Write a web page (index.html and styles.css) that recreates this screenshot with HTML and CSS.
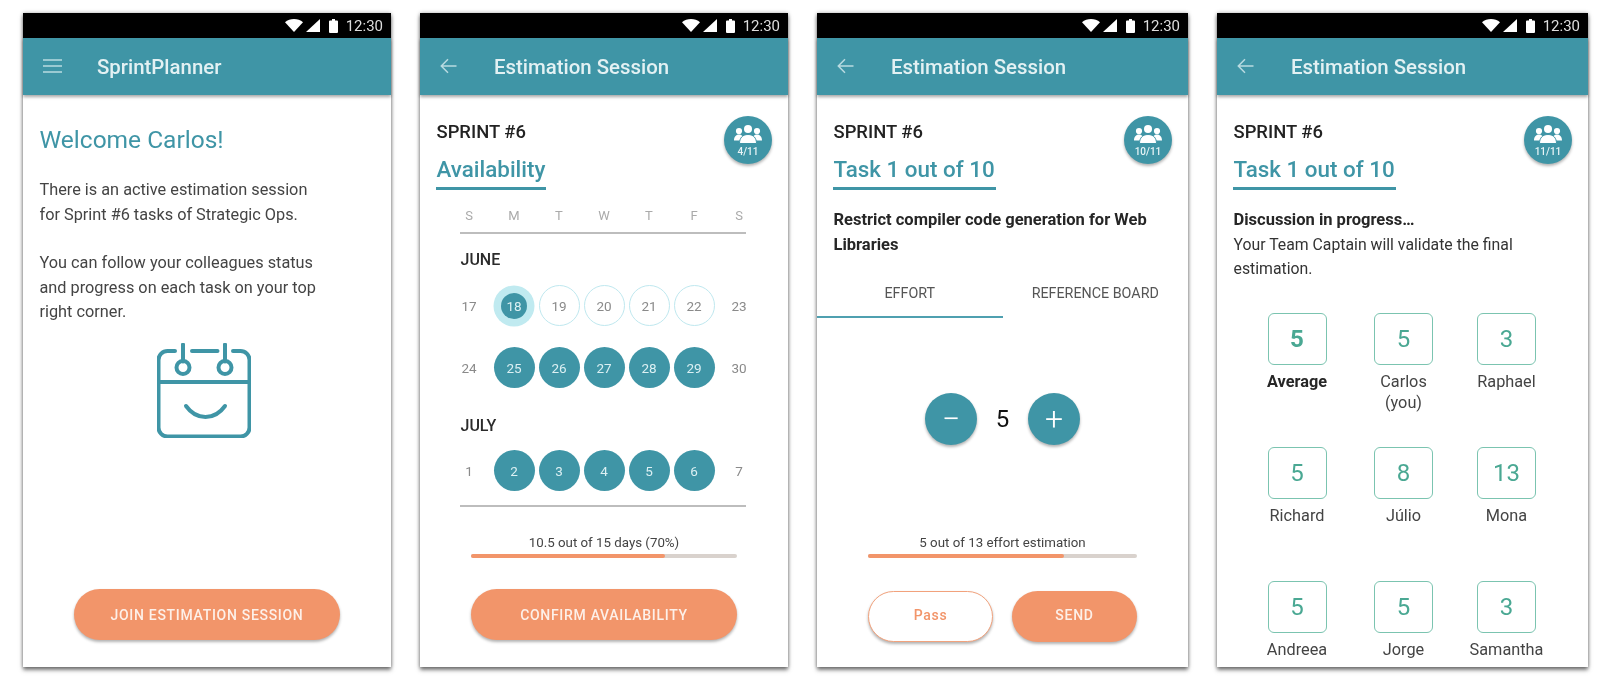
FILE: index.html
```html
<!DOCTYPE html>
<html lang="en">
<head>
    <meta charset="UTF-8">
    <title>SprintPlanner</title>
    <link rel="stylesheet" href="styles.css">
</head>
<body>
    <svg class="defs" width="0" height="0">
        <symbol id="wifi" viewBox="0 0 18 13"><path d="M0 3.2C2.5 1.1 5.6 0 9 0s6.500 1.100 9 3.200L9 13z"/></symbol>
        <symbol id="signal" viewBox="0 0 14 13"><path d="M14 0v13H0z"/></symbol>
        <symbol id="battery" viewBox="0 0 9 14"><path d="M3 0h3v1.500h2a1 1 0 0 1 1 1V13a1 1 0 0 1-1 1H1a1 1 0 0 1-1-1V2.500a1 1 0 0 1 1-1h2z"/></symbol>
        <symbol id="menu" viewBox="0 0 19 14"><path d="M0 1h19M0 7h19M0 13h19" fill="none" stroke="currentColor" stroke-width="1.500"/></symbol>
        <symbol id="back" viewBox="0 0 17 16"><path d="M16.500 8H1.500M8 1.300 1.300 8 8 14.700" fill="none" stroke="currentColor" stroke-width="1.500"/></symbol>
        <symbol id="team" viewBox="0 0 28 19">
            <circle cx="14" cy="4" r="4"/>
            <circle cx="5" cy="6" r="3.100"/>
            <circle cx="23" cy="6" r="3.100"/>
            <path d="M0 15.500c0-3.500 2-6 5-6s5 2.500 5 6zM18 15.500c0-3.500 2-6 5-6s5 2.500 5 6z"/>
            <path d="M5.500 18.500c0-5.500 3-9 8.500-9s8.500 3.500 8.500 9z" stroke="#3f95a6" stroke-width="1"/>
        </symbol>
    </svg>

    <div class="phones">
        <!-- home -->
        <section class="phone">
            <div class="statusbar">
                <svg class="st-wifi"><use href="#wifi"/></svg>
                <svg class="st-signal"><use href="#signal"/></svg>
                <svg class="st-battery"><use href="#battery"/></svg>
                <span class="st-time">12:30</span>
            </div>
            <header class="appbar">
                <svg class="appbar-menu"><use href="#menu"/></svg>
                <h1>SprintPlanner</h1>
            </header>
            <div class="content">
                <h2 class="welcome">Welcome Carlos!</h2>
                <p class="intro">There is an active estimation session<br>for Sprint #6 tasks of Strategic Ops.</p>
                <p class="intro">You can follow your colleagues status<br>and progress on each task on your top<br>right corner.</p>
                <svg class="calendar-face" viewBox="0 0 94 95" fill="none" stroke="#3f95a6" stroke-width="4" stroke-linecap="round">
                    <path d="M18 8h-7.500a9 9 0 0 0-9 9v67.500a9 9 0 0 0 9 9h73a9 9 0 0 0 9-9V17a9 9 0 0 0-9-9H76"/>
                    <path d="M35 8h25.500M1.500 39h91"/>
                    <path d="M26 1.500v17M68 1.500v17"/>
                    <circle cx="26" cy="24.500" r="6.500"/>
                    <circle cx="68" cy="24.500" r="6.500"/>
                    <path d="M29 63c5 7 11 11 19.500 11S63 70 68 63"/>
                </svg>
            </div>
            <div class="footer">
                <button class="btn">JOIN ESTIMATION SESSION</button>
            </div>
        </section>

        <!-- availability -->
        <section class="phone">
            <div class="statusbar">
                <svg class="st-wifi"><use href="#wifi"/></svg>
                <svg class="st-signal"><use href="#signal"/></svg>
                <svg class="st-battery"><use href="#battery"/></svg>
                <span class="st-time">12:30</span>
            </div>
            <header class="appbar">
                <svg class="appbar-back"><use href="#back"/></svg>
                <h1>Estimation Session</h1>
            </header>
            <div class="content">
                <div class="team-badge">
                    <svg><use href="#team"/></svg>
                    <span>4/11</span>
                </div>
                <div class="sprint">SPRINT #6</div>
                <h2 class="section-title">Availability</h2>
                <div class="calendar">
                    <div class="cal-row cal-head">
                        <span>S</span><span>M</span><span>T</span><span>W</span><span>T</span><span>F</span><span>S</span>
                    </div>
                    <hr class="cal-line cal-line-top">
                    <div class="cal-month">JUNE</div>
                    <div class="cal-row">
                        <span class="day">17</span>
                        <span class="day day-today">18</span>
                        <span class="day day-open">19</span>
                        <span class="day day-open">20</span>
                        <span class="day day-open">21</span>
                        <span class="day day-open">22</span>
                        <span class="day">23</span>
                    </div>
                    <div class="cal-row cal-row-next">
                        <span class="day">24</span>
                        <span class="day day-on">25</span>
                        <span class="day day-on">26</span>
                        <span class="day day-on">27</span>
                        <span class="day day-on">28</span>
                        <span class="day day-on">29</span>
                        <span class="day">30</span>
                    </div>
                    <div class="cal-month cal-month-next">JULY</div>
                    <div class="cal-row">
                        <span class="day">1</span>
                        <span class="day day-on">2</span>
                        <span class="day day-on">3</span>
                        <span class="day day-on">4</span>
                        <span class="day day-on">5</span>
                        <span class="day day-on">6</span>
                        <span class="day">7</span>
                    </div>
                    <hr class="cal-line cal-line-bottom">
                </div>
            </div>
            <div class="footer">
                <p class="progress-label">10.5 out of 15 days (70%)</p>
                <div class="progress"><div class="progress-fill" style="width: 73%"></div></div>
                <button class="btn">CONFIRM AVAILABILITY</button>
            </div>
        </section>

        <!-- effort -->
        <section class="phone phone-wide">
            <div class="statusbar">
                <svg class="st-wifi"><use href="#wifi"/></svg>
                <svg class="st-signal"><use href="#signal"/></svg>
                <svg class="st-battery"><use href="#battery"/></svg>
                <span class="st-time">12:30</span>
            </div>
            <header class="appbar">
                <svg class="appbar-back"><use href="#back"/></svg>
                <h1>Estimation Session</h1>
            </header>
            <div class="content">
                <div class="team-badge">
                    <svg><use href="#team"/></svg>
                    <span>10/11</span>
                </div>
                <div class="sprint">SPRINT #6</div>
                <h2 class="section-title">Task 1 out of 10</h2>
                <p class="task-text"><strong>Restrict compiler code generation for Web Libraries</strong></p>
                <div class="tabs">
                    <div class="tab tab-active">EFFORT</div>
                    <div class="tab">REFERENCE BOARD</div>
                </div>
                <div class="stepper">
                    <button class="step-btn">&minus;</button>
                    <span class="step-value">5</span>
                    <button class="step-btn">+</button>
                </div>
            </div>
            <div class="footer footer-pair">
                <p class="progress-label">5 out of 13 effort estimation</p>
                <div class="progress"><div class="progress-fill" style="width: 73%"></div></div>
                <div class="btn-pair">
                    <button class="btn btn-outline">Pass</button>
                    <button class="btn">SEND</button>
                </div>
            </div>
        </section>

        <!-- discussion -->
        <section class="phone phone-wide">
            <div class="statusbar">
                <svg class="st-wifi"><use href="#wifi"/></svg>
                <svg class="st-signal"><use href="#signal"/></svg>
                <svg class="st-battery"><use href="#battery"/></svg>
                <span class="st-time">12:30</span>
            </div>
            <header class="appbar">
                <svg class="appbar-back"><use href="#back"/></svg>
                <h1>Estimation Session</h1>
            </header>
            <div class="content">
                <div class="team-badge">
                    <svg><use href="#team"/></svg>
                    <span>11/11</span>
                </div>
                <div class="sprint">SPRINT #6</div>
                <h2 class="section-title">Task 1 out of 10</h2>
                <p class="task-text task-text-plain"><strong>Discussion in progress…</strong><br>Your Team Captain will validate the final estimation.</p>
                <div class="votes">
                    <div class="vote vote-average"><div class="vote-box">5</div><div class="vote-name">Average</div></div>
                    <div class="vote"><div class="vote-box">5</div><div class="vote-name">Carlos<br>(you)</div></div>
                    <div class="vote"><div class="vote-box">3</div><div class="vote-name">Raphael</div></div>
                    <div class="vote"><div class="vote-box">5</div><div class="vote-name">Richard</div></div>
                    <div class="vote"><div class="vote-box">8</div><div class="vote-name">Júlio</div></div>
                    <div class="vote"><div class="vote-box">13</div><div class="vote-name">Mona</div></div>
                    <div class="vote"><div class="vote-box">5</div><div class="vote-name">Andreea</div></div>
                    <div class="vote"><div class="vote-box">5</div><div class="vote-name">Jorge</div></div>
                    <div class="vote"><div class="vote-box">3</div><div class="vote-name">Samantha</div></div>
                </div>
            </div>
        </section>
    </div>
</body>
</html>
```

FILE: styles.css
```css
body {
    box-sizing: border-box;
    min-height: 100vh;
    margin: 0;
    padding: 13px 0 0 23px;
    background-color: white;
    font-family: Roboto, "Liberation Sans", sans-serif;
    color: #333;
}

.defs {
    position: absolute;
}

/* the reference is a slightly soft, scaled-up picture */
.phones {
    display: flex;
    gap: 29px;
    filter: blur(0.35px);
}

.phone {
    position: relative;
    display: flex;
    flex-direction: column;
    width: 368px;
    height: 654px;
    background-color: white;
    box-shadow: 0 3px 4px rgba(0, 0, 0, 0.5), 0 0 4px rgba(0, 0, 0, 0.3);
}

.phone-wide {
    width: 371px;
}

/* status bar */
.statusbar {
    box-sizing: border-box;
    display: flex;
    align-items: center;
    justify-content: flex-end;
    height: 24.5px;
    padding: 1px 8px 0 0;
    background-color: black;
    color: #ddd;
    flex-shrink: 0;
}

.statusbar svg {
    fill: white;
}

.st-wifi {
    width: 18px;
    height: 13px;
}

.st-signal {
    width: 14px;
    height: 13px;
    margin-left: 3px;
}

.st-battery {
    width: 9px;
    height: 14px;
    margin-left: 9px;
}

.st-time {
    margin-left: 8px;
    font-size: 15px;
}

/* app bar */
.appbar {
    position: relative;
    z-index: 2;
    display: flex;
    align-items: center;
    height: 57.5px;
    flex-shrink: 0;
    background-color: #3f95a6;
    box-shadow: 0 2px 3px rgba(0, 0, 0, 0.35);
    color: #b9dbe1;
}

.appbar h1 {
    margin: 0;
    padding-top: 2px;
    font-size: 20.400px;
    font-weight: 500;
    color: #e3f1f3;
}

.appbar-menu {
    width: 19px;
    height: 14px;
    margin: 0 35px 0 20px;
}

.appbar-back {
    width: 17px;
    height: 16px;
    margin: 0 37px 0 20px;
}

/* content */
.content {
    position: relative;
    flex: 1;
    min-height: 0;
    padding: 25px 16.500px 0;
    overflow: hidden;
}

.welcome {
    margin: 5px 0 23px;
    font-size: 24.500px;
    font-weight: 400;
    line-height: 30px;
    color: #3f95a6;
}

.intro {
    margin: 0 0 24px;
    font-size: 16.300px;
    line-height: 24.500px;
    color: #444;
}

.calendar-face {
    display: block;
    width: 94px;
    height: 95px;
    margin: -5.500px 0 0 117.500px;
}

.sprint {
    font-size: 18.400px;
    font-weight: 500;
    line-height: 24px;
    color: #222;
}

.section-title {
    display: table;
    margin: 10px 0 0 -1px;
    padding: 0 1px 3px 1px;
    border-bottom: 3px solid #3f95a6;
    font-size: 22.400px;
    font-weight: 500;
    line-height: 30px;
    color: #3f95a6;
}

.team-badge {
    position: absolute;
    top: 21px;
    right: 16px;
    display: flex;
    flex-direction: column;
    align-items: center;
    width: 48px;
    height: 48px;
    border-radius: 50%;
    background-color: #3f95a6;
    box-shadow: 0 2px 3px rgba(0, 0, 0, 0.3);
    color: #e8f4f6;
}

.team-badge svg {
    width: 28px;
    height: 19px;
    margin-top: 9px;
    fill: white;
}

.team-badge span {
    margin-top: 1px;
    font-size: 10px;
    font-weight: 500;
    line-height: 14px;
}

/* calendar */
.calendar {
    margin: 15px 0 0 10px;
}

.cal-row {
    display: grid;
    grid-template-columns: repeat(7, 45px);
    justify-items: center;
    align-items: center;
}

.cal-head {
    height: 20px;
    font-size: 13px;
    color: #aaa;
}

.cal-line {
    width: 286px;
    margin: 0 0 0 13.500px;
    border: 0;
    border-top: 2px solid #bdbdbd;
}

.cal-line-top {
    margin-top: 7px;
}

.cal-line-bottom {
    margin-top: 14px;
}

.cal-month {
    margin: 16px 0 15px 14px;
    font-size: 16px;
    font-weight: 500;
    line-height: 20px;
    color: #2b2b2b;
}

.cal-month-next {
    margin: 28px 0 14px 14px;
}

.cal-row-next {
    margin-top: 21px;
}

.day {
    display: flex;
    align-items: center;
    justify-content: center;
    box-sizing: border-box;
    width: 41px;
    height: 41px;
    border-radius: 50%;
    font-size: 13.500px;
    color: #8a8a8a;
}

.day-open {
    border: 1px solid #bfe8ef;
}

.day-on {
    background-color: #3f95a6;
    color: #dcf0f3;
}

.day-today {
    width: 26px;
    height: 26px;
    margin: 7.500px;
    background-color: #3f95a6;
    box-shadow: 0 0 0 7.500px #c0eaf0;
    color: #dcf0f3;
}

/* footer with progress and button */
.footer {
    flex-shrink: 0;
    padding: 0 51px 27px;
}

.footer-pair {
    padding-bottom: 25px;
}

.progress-label {
    margin: 0 0 1px;
    font-size: 13.300px;
    line-height: 20px;
    text-align: center;
    color: #444;
}

.progress {
    height: 4px;
    margin-bottom: 31px;
    border-radius: 2px;
    background-color: #d9d2cd;
}

.footer-pair .progress {
    margin-bottom: 33px;
}

.progress-fill {
    height: 100%;
    border-radius: 2px;
    background-color: #f2956a;
}

.btn {
    display: block;
    width: 100%;
    height: 51px;
    padding: 1px 0 0;
    border: none;
    border-radius: 26px;
    background-color: #f2956a;
    box-shadow: 0 2px 3px rgba(0, 0, 0, 0.3);
    font-family: inherit;
    font-size: 14px;
    font-weight: 500;
    letter-spacing: 0.7px;
    color: #fdf0e9;
}

.btn-pair {
    display: flex;
    justify-content: space-between;
}

.btn-pair .btn {
    width: 125px;
    padding: 0 0 3px;
}

.btn-outline {
    border: 1.500px solid #f2a27c;
    background-color: white;
    color: #f2956a;
}

/* tabs */
.task-text {
    margin: 18px 0 0;
    font-size: 16px;
    line-height: 24.500px;
    color: #333;
}

.task-text strong {
    font-size: 16.500px;
    font-weight: 700;
    color: #262626;
}

.task-text-plain {
    font-size: 15.800px;
}

.tabs {
    display: flex;
    margin: 26px -16.500px 0;
}

.tab {
    flex: 1;
    padding-bottom: 13px;
    border-bottom: 2px solid transparent;
    font-size: 14.300px;
    line-height: 20px;
    text-align: center;
    color: #555;
}

.tab-active {
    border-bottom-color: #4fa0b0;
}

/* stepper */
.stepper {
    display: flex;
    align-items: center;
    justify-content: center;
    margin-top: 75px;
}

.step-btn {
    width: 52px;
    height: 52px;
    padding: 0;
    border: none;
    border-radius: 50%;
    background-color: #3f95a6;
    box-shadow: 0 2px 3px rgba(0, 0, 0, 0.3);
    font-family: inherit;
    font-size: 32px;
    font-weight: 300;
    color: white;
}

.step-value {
    width: 51px;
    font-size: 24px;
    text-align: center;
    color: #111;
}

/* votes */
.votes {
    display: grid;
    grid-template-columns: 106px 107px 99px;
    grid-auto-rows: 134px;
    margin: 31px 0 0 10.500px;
}

.vote {
    display: flex;
    flex-direction: column;
    align-items: center;
}

.vote-box {
    display: flex;
    align-items: center;
    justify-content: center;
    box-sizing: border-box;
    width: 59px;
    height: 52px;
    padding-top: 1px;
    border: 1.500px solid #7bc4b0;
    border-radius: 6px;
    font-size: 24px;
    color: #4aa893;
}

.vote-name {
    margin-top: 6px;
    font-size: 16.300px;
    line-height: 21px;
    text-align: center;
    white-space: nowrap;
    color: #444;
}

.vote-average .vote-box {
    font-weight: 700;
}

.vote-average .vote-name {
    font-weight: 700;
    color: #262626;
}
```
